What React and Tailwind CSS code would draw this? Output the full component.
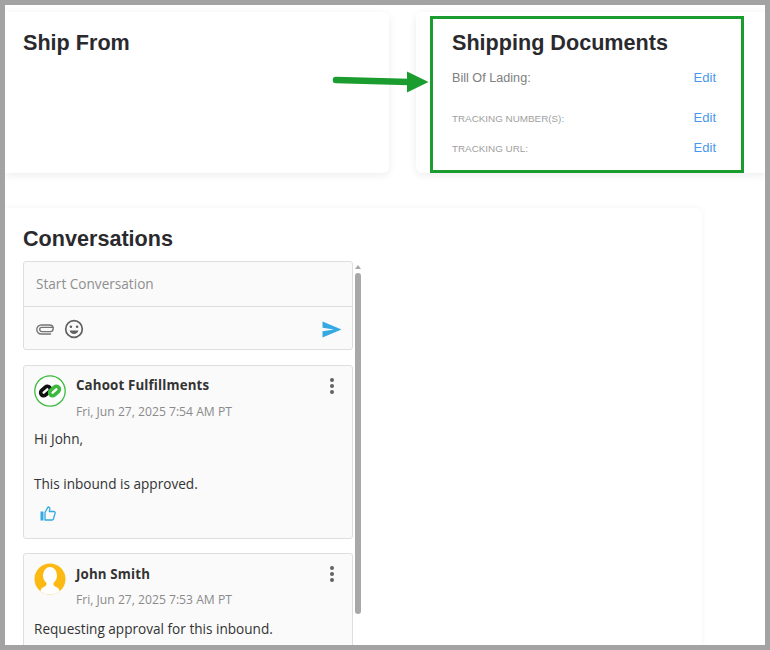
import React from 'react';

const arial = "font-['Liberation_Sans',Arial,sans-serif]";
const openSans = "font-['Open_Sans',sans-serif]";

const Clip = () => (
  <svg width="18" height="11" viewBox="0 0 18 11" fill="none" stroke="#757575" strokeWidth="1.400" strokeLinecap="round">
    <path d="M17 3.400H5.800a2 2 0 0 0 0 4.200h8.700" />
    <path d="M14.500 10H5.200A4.400 4.400 0 0 1 .8 5.500 4.500 4.500 0 0 1 5.300 1h8.200c2 0 3.700 1.200 3.700 3.600 0 1.800-1.200 3-2.700 3" />
  </svg>
);

const Smile = () => (
  <svg width="20" height="20" viewBox="0 0 20 20" fill="none">
    <circle cx="10" cy="10" r="8.300" stroke="#616161" strokeWidth="1.700" />
    <circle cx="6.900" cy="7.800" r="1.300" fill="#616161" />
    <circle cx="13.100" cy="7.800" r="1.300" fill="#616161" />
    <path d="M5.600 11.600h8.800c-.5 2.200-2.200 3.500-4.400 3.500s-3.900-1.300-4.400-3.500z" fill="#616161" />
  </svg>
);

const Send = () => (
  <svg width="20" height="17" viewBox="0 0 20 17">
    <path d="M0.500 0.500 19.500 8.500 0.500 16.500V10.300L12 8.500 0.500 6.700z" fill="#35a9e1" />
  </svg>
);

const Dots = () => (
  <div className="flex flex-col gap-[2px] pt-[3px] mr-[8px]">
    <span className="w-1 h-1 rounded-full bg-[#616161]" />
    <span className="w-1 h-1 rounded-full bg-[#616161]" />
    <span className="w-1 h-1 rounded-full bg-[#616161]" />
  </div>
);

const ThumbUp = () => (
  <svg width="16" height="15" viewBox="0 0 16 15" fill="none">
    <rect x="0.500" y="5.500" width="3" height="9" fill="#35a9e1" />
    <path d="M5 6.500 8 1c1.400 0 2 .9 1.800 2.200L9.300 5.500h4.600c.9 0 1.500.8 1.200 1.700l-1.700 5.800c-.2.700-.7 1-1.300 1H5z" stroke="#35a9e1" strokeWidth="1.300" strokeLinejoin="round" />
  </svg>
);

const CahootLogo = () => (
  <svg width="32" height="32" viewBox="0 0 32 32" fill="none" className="shrink-0">
    <circle cx="16" cy="16" r="15.200" fill="#fff" stroke="#3dba3d" strokeWidth="1.300" />
    <rect x="6" y="13" width="11" height="6" rx="3" stroke="#111" strokeWidth="3.600" transform="rotate(-42 11.500 16)" />
    <rect x="15" y="13" width="11" height="6" rx="3" stroke="#3dba3d" strokeWidth="3.600" transform="rotate(-42 20.500 16)" />
  </svg>
);

const UserAvatar = () => (
  <svg width="32" height="32" viewBox="0 0 32 32" className="shrink-0">
    <defs>
      <clipPath id="avatarClip"><circle cx="16" cy="16" r="15.500" /></clipPath>
    </defs>
    <circle cx="16" cy="16" r="15.500" fill="#fdb913" />
    <g clipPath="url(#avatarClip)" fill="#fff">
      <ellipse cx="16" cy="12.500" rx="7" ry="8.500" />
      <path d="M12.500 18h7v3.500c0 1.500 3 2.500 4.500 3.500 1 .6 2 3 2 7H6c0-4 1-6.400 2-7 1.500-1 4.500-2 4.500-3.500z" />
    </g>
  </svg>
);

const Message = ({ avatar, name, date, nameClass, children }) => (
  <div className="border border-[#dedede] rounded-[3px] bg-[#fafafa] pt-[9px] px-[10px] mb-[14px]">
    <div className="flex gap-[10px]">
      {avatar}
      <div className="flex-1">
        <div className="flex justify-between">
          <span className={`text-[13.300px] font-bold text-[#333] leading-[20px] tracking-[0.15px] ${nameClass}`}>{name}</span>
          <Dots />
        </div>
        <p className="text-[12.150px] text-[#8a8a8a] leading-[16px] mt-[9px]">{date}</p>
      </div>
    </div>
    {children}
  </div>
);

const EditLink = () => <span className="text-[13px] leading-[15px] text-[#4a98ec]">Edit</span>;

export default function App() {
  return (
    <div className={`w-[770px] h-[650px] overflow-hidden bg-white border-[5px] border-[#a3a3a3] relative ${openSans}`}>
      <div className="flex flex-col gap-[35px] pt-[7px]">
        <div className="flex gap-[27px] h-[161px]">
          <div className="w-[384px] shrink-0 bg-white rounded-r-md shadow-[0_2px_8px_rgba(0,0,0,0.08)] pl-[18px] pt-[17px]">
            <h2 className={`text-[21.600px] leading-[28px] font-bold text-[#2a2a2e] ${arial}`}>Ship From</h2>
          </div>
          <div className={`flex-1 bg-white rounded-l-md shadow-[0_2px_8px_rgba(0,0,0,0.08)] pt-[17px] pl-[36px] pr-[49px] ${arial}`}>
            <h2 className="text-[21.600px] leading-[28px] font-bold text-[#2a2a2e]">Shipping Documents</h2>
            <div className="flex justify-between items-center mt-[11px] h-[18px]">
              <span className="text-[12.650px] text-[#808080] pt-[2px]">Bill Of Lading:</span>
              <EditLink />
            </div>
            <div className="flex justify-between items-center mt-[22px] h-[18px]">
              <span className="text-[9.850px] text-[#a0a0a0] pt-[4px]">TRACKING NUMBER(S):</span>
              <EditLink />
            </div>
            <div className="flex justify-between items-center mt-[12px] h-[18px]">
              <span className="text-[9.850px] text-[#a0a0a0] pt-[4px]">TRACKING URL:</span>
              <EditLink />
            </div>
          </div>
        </div>

        <div className="w-[697px] h-[460px] bg-white rounded-r-md shadow-[0_0_6px_rgba(0,0,0,0.05)] pl-[18px] pt-[17px]">
          <h2 className={`text-[21.600px] leading-[28px] font-bold text-[#2a2a2e] ${arial}`}>Conversations</h2>
          <div className="flex gap-[2px] mt-[8px]">
            <div className="w-[330px] shrink-0">
              <div className="border border-[#dedede] rounded-[3px] bg-[#fafafa] mb-[15px]">
                <div className="h-[45px] border-b border-[#dedede] flex items-center pl-[12px] text-[13.600px] text-[#8f8f8f]">
                  Start Conversation
                </div>
                <div className="h-[42px] flex items-center pl-[12px] pr-[10px] pt-[2px]">
                  <Clip />
                  <span className="ml-[10px] flex"><Smile /></span>
                  <span className="ml-auto flex"><Send /></span>
                </div>
              </div>
              <Message avatar={<CahootLogo />} name="Cahoot Fulfillments" date="Fri, Jun 27, 2025 7:54 AM PT">
                <div className="text-[13.600px] leading-[22px] text-[#333] mt-[8px]">
                  <p>Hi John,</p>
                  <p className="mt-[23px]">This inbound is approved.</p>
                </div>
                <div className="flex pl-[6px] pt-[11px] pb-[17px]"><ThumbUp /></div>
              </Message>
              <Message avatar={<UserAvatar />} name="John Smith" nameClass="translate-y-px" date="Fri, Jun 27, 2025 7:53 AM PT">
                <p className="text-[13.600px] leading-[22px] text-[#333] mt-[10px] pb-[30px]">Requesting approval for this inbound.</p>
              </Message>
            </div>
            <div className="w-[6px] flex flex-col items-center">
              <span className="w-0 h-0 border-x-[3px] border-x-transparent border-b-[4px] border-b-[#a8a8a8] mt-[4px]" />
              <span className="w-[6px] h-[341px] rounded-[3px] bg-[#a8a8a8] mt-[4px]" />
            </div>
          </div>
        </div>
      </div>

      {/* annotation over the screenshot */}
      <div className="absolute left-[425px] top-[11px] w-[314px] h-[157px] border-[3px] border-[#1a9c2e] pointer-events-none" />
      <svg className="absolute left-[327px] top-[65px] pointer-events-none" width="98" height="24" viewBox="0 0 98 24">
        <path d="M4 10 77 12" stroke="#1a9c2e" strokeWidth="6.500" strokeLinecap="round" />
        <path d="M75 1.500 96.500 12 75 22.500z" fill="#1a9c2e" />
      </svg>
    </div>
  );
}
